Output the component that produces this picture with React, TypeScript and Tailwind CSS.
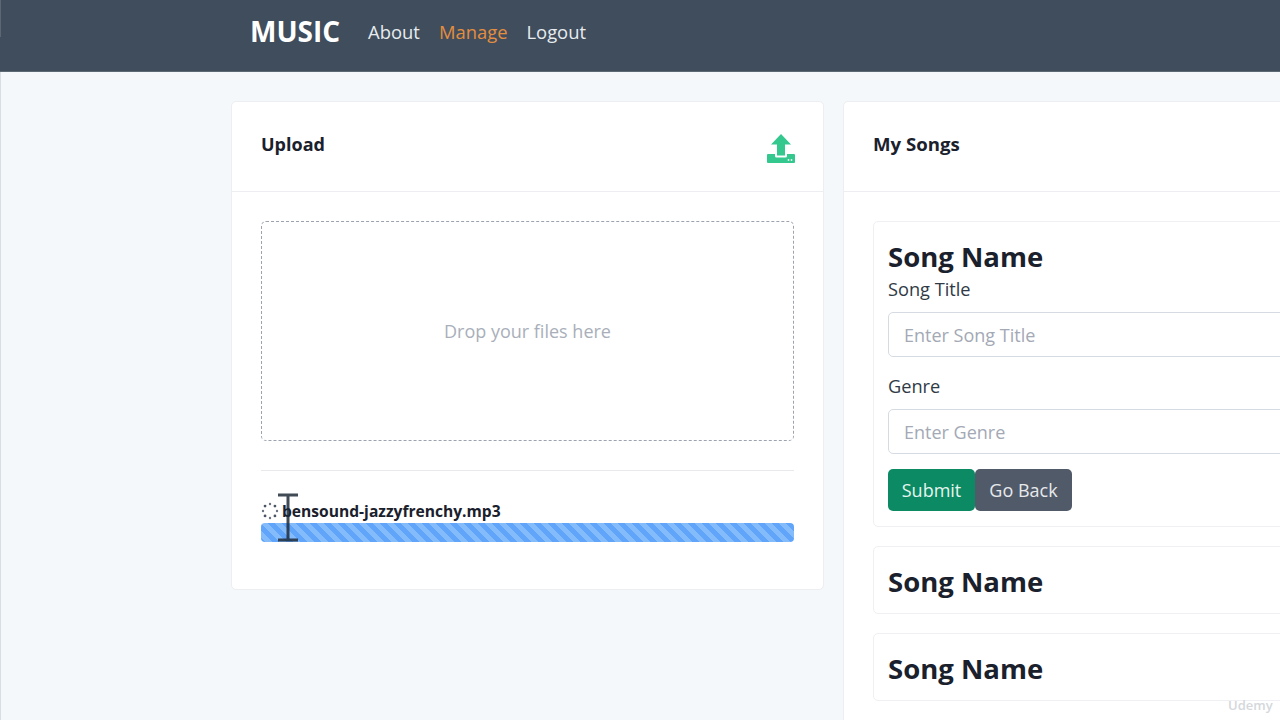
import React from "react";

function UploadIcon() {
  return (
    <svg width="30" height="30" viewBox="0 0 30 30" className="mt-[5px] block">
      <path fill="#34c88f" d="M15 0 L25 10.5 L19 10.5 L19 21.5 L11 21.5 L11 10.5 L5 10.5 Z" />
      <path fill="#34c88f" d="M2 20 Q1 20 1 21 L1 28 Q1 29 2 29 L28 29 Q29 29 29 28 L29 21 Q29 20 28 20 L21 20 L21 22 Q21 23.5 19.5 23.5 L10.5 23.5 Q9 23.5 9 22 L9 20 Z" />
      <circle cx="22.5" cy="26" r="0.9" fill="#e5f8f0" />
      <circle cx="25.5" cy="26" r="0.9" fill="#e5f8f0" />
    </svg>
  );
}

function Spinner() {
  const angles = [0, 45, 90, 135, 180, 225, 270, 315];
  return (
    <svg width="18" height="18" viewBox="0 0 18 18" className="block shrink-0">
      {angles.map((a, i) => (
        <circle
          key={a}
          cx={9 + 7 * Math.cos((a * Math.PI) / 180)}
          cy={9 + 7 * Math.sin((a * Math.PI) / 180)}
          r={i % 2 ? 1.4 : 1.2}
          fill={i % 2 ? "#4b5563" : "#6b7280"}
        />
      ))}
    </svg>
  );
}

function Field({ label, placeholder }: { label: string; placeholder: string }) {
  return (
    <div className="w-[500px]">
      <div className="text-[18.2px] leading-[27px] text-[#2f3a46]">{label}</div>
      <div className="mt-[9px] flex h-[45px] items-center rounded-[5px] border border-[#d6dbe3] bg-white pl-[15px] pt-[2px] text-[18px] text-[#a3a9b5]">
        {placeholder}
      </div>
    </div>
  );
}

function CollapsedSong() {
  return (
    <div className="flex h-[68px] items-center rounded-[5px] border border-[#eef0f3] bg-white pl-[14px] pt-[4px]">
      <span className="text-[27.5px] font-bold text-[#1a202c]">Song Name</span>
    </div>
  );
}

export default function App() {
  return (
    <div
      className="relative h-[720px] w-[1280px] overflow-hidden bg-[#f5f8fa]"
      style={{ fontFamily: '"Open Sans", "Noto Sans", "Liberation Sans", sans-serif' }}
    >
      <header className="flex h-[72px] items-center border-b border-[#5d6875] bg-[#3f4d5c] pb-[7px] pl-[250px]">
        <span className="mb-[3px] text-[28px] font-bold leading-none text-white">MUSIC</span>
        <nav className="ml-[28px] flex gap-[19px] text-[18.4px] text-[#e7ebef]">
          <span>About</span>
          <span className="text-[#e58d3f]">Manage</span>
          <span>Logout</span>
        </nav>
      </header>
      <div className="absolute left-0 top-0 h-[37px] w-px bg-[#5c6674]" />
      <div className="absolute left-0 top-[72px] h-[648px] w-px bg-[#d9dee4]" />

      <main className="flex w-[1500px] items-start gap-[19px] pl-[231px] pt-[29px]">
        <section className="w-[593px] rounded-[5px] border border-[#eceef1] bg-white">
          <div className="flex h-[90px] items-center justify-between border-b border-[#eceef1] pl-[29px] pr-[27px]">
            <span className="mb-[4px] text-[18px] font-bold text-[#1a202c]">Upload</span>
            <UploadIcon />
          </div>
          <div className="px-[29px] pb-[47px] pt-[29px]">
            <div className="flex h-[220px] items-center justify-center rounded-[5px] border border-dashed border-[#9ca3af] text-[18px] text-[#a9afba]">
              Drop your files here
            </div>
            <hr className="mt-[29px] border-[#e7e9ed]" />
            <div className="mt-[30px] flex items-center gap-[3px]">
              <Spinner />
              <span className="text-[15.6px] font-bold leading-[20px] text-[#1a202c]">bensound-jazzyfrenchy.mp3</span>
            </div>
            <div
              className="mt-[2px] h-[19px] rounded-[4px] bg-[#60a5fa]"
              style={{
                backgroundImage:
                  "linear-gradient(45deg,#84bbfb 25%,transparent 25%,transparent 50%,#84bbfb 50%,#84bbfb 75%,transparent 75%,transparent)",
                backgroundSize: "14px 14px",
              }}
            />
          </div>
        </section>

        <section className="h-[700px] w-[640px] rounded-[5px] border border-[#eceef1] bg-white">
          <div className="flex h-[90px] items-center border-b border-[#eceef1] pl-[29px]">
            <span className="mb-[6px] text-[18.6px] font-bold text-[#1a202c]">My Songs</span>
          </div>
          <div className="flex flex-col gap-[19px] px-[29px] pt-[29px]">
            <div className="flex h-[306px] flex-col rounded-[5px] border border-[#eef0f3] bg-white pl-[14px] pt-[16px]">
              <span className="text-[27.5px] font-bold leading-[38px] text-[#1a202c]">Song Name</span>
              <Field label="Song Title" placeholder="Enter Song Title" />
              <div className="mt-[16px]">
                <Field label="Genre" placeholder="Enter Genre" />
              </div>
              <div className="mt-[15px] flex text-[18px] text-white">
                <span className="flex h-[42px] w-[87px] items-center justify-center rounded-[5px] bg-[#0b8a63] text-[#e6f5ef]">
                  Submit
                </span>
                <span className="flex h-[42px] w-[97px] items-center justify-center rounded-[5px] bg-[#515a69] text-[#e7e9ec]">
                  Go Back
                </span>
              </div>
            </div>
            <CollapsedSong />
            <CollapsedSong />
          </div>
        </section>
      </main>

      <svg width="22" height="50" viewBox="0 0 22 50" className="absolute left-[277px] top-[493px]">
        <path d="M1 2 H21 M11 2 V47 M1 47 H21" stroke="#1f2c38" strokeWidth="3" fill="none" opacity="0.85" />
      </svg>
      <span className="absolute left-[1228px] top-[696px] text-[13px] font-semibold text-[#d4d8dc]">Udemy</span>
    </div>
  );
}
